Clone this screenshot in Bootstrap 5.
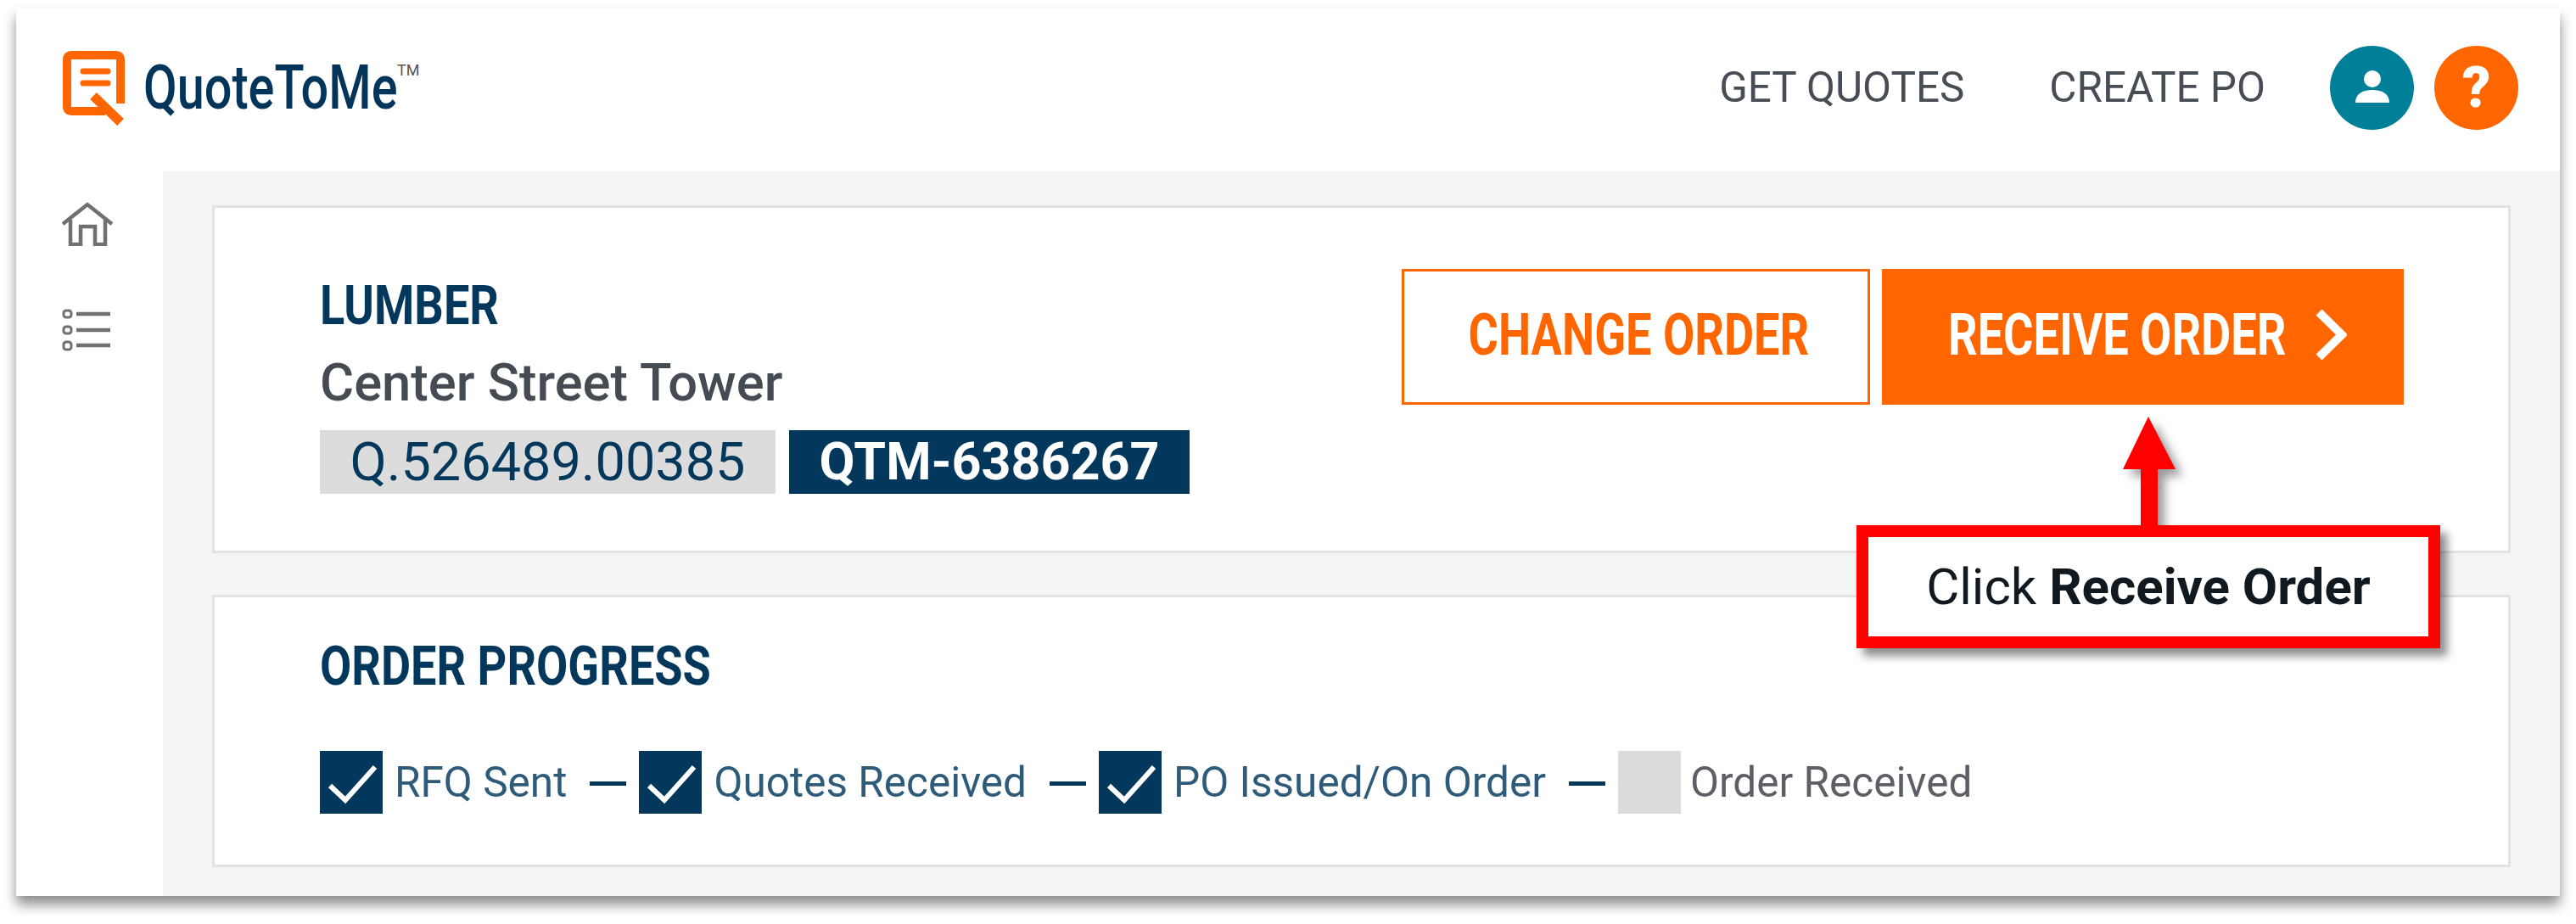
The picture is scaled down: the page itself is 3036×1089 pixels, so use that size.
<!DOCTYPE html>
<html lang="en">
<head>
    <meta charset="UTF-8">
    <title>QuoteToMe - Receive Order</title>
    <link rel="stylesheet" href="https://cdn.jsdelivr.net/npm/bootstrap@5.3.0/dist/css/bootstrap.min.css">
    <style>
        body {
            font-family: Roboto, "Liberation Sans", sans-serif;
            background-color: #fff;
            margin: 0;
            padding: 10px 0 30px 19px;
        }
        .app-window {
            position: relative;
            width: 2998px;
            height: 1046px;
            background-color: #fff;
            box-shadow: 0 10px 14px rgba(0, 0, 0, .45);
        }
        .top-bar {
            height: 192px;
            padding-left: 55px;
            padding-right: 49px;
            padding-bottom: 5px;
        }
        .logo-text {
            font-size: 72px;
            line-height: 1;
            color: #03345a;
            font-weight: 500;
            display: inline-block;
            width: 298px;
            margin-left: 22px;
            white-space: nowrap;
            transform: scaleX(.8);
            transform-origin: left center;
        }
        .logo-tm {
            font-size: 18px;
            line-height: 1;
            color: #555;
            margin-left: 1px;
            align-self: flex-start;
            margin-top: 64px;
        }
        .top-link {
            font-size: 49.400px;
            color: #474d55;
            text-decoration: none;
            white-space: nowrap;
        }
        .top-link + .top-link { margin-left: 100px; }
        .round-btn {
            width: 99px;
            height: 99px;
            border-radius: 50%;
            color: #fff;
            font-size: 66px;
            font-weight: 900;
            line-height: 1;
        }
        .round-first { margin-left: 76px; }
        .round-teal { background-color: #007f99; }
        .round-orange { background-color: #ff6600; }
        .side-rail {
            width: 173px;
            padding-left: 54px;
            padding-top: 36px;
            gap: 74px;
        }
        .work-area {
            background-color: #f4f6f6;
            padding: 40px 58px 33px 58px;
            gap: 49px;
            height: 854px;
        }
        .panel {
            border: 3px solid #e2e4e4;
            background-color: #fff;
        }
        .panel-order {
            height: 410px;
            padding: 72px 123px 0 124px;
        }
        .order-info { padding-top: 12px; }
        .order-actions { gap: 14px; }
        .panel-progress {
            height: 321px;
            padding: 50px 124px 0 124px;
        }
        .panel-title {
            font-size: 64px;
            line-height: 1;
            font-weight: 700;
            color: #03385c;
            margin: 0;
            white-space: nowrap;
            transform: scaleX(.845);
            transform-origin: left center;
        }
        .job-name {
            font-size: 61.500px;
            line-height: 1;
            color: #444b52;
            font-weight: 500;
            margin-top: 28px;
            white-space: nowrap;
        }
        .ref-row { margin-top: 24px; }
        .ref-tag {
            height: 75px;
            font-size: 63px;
            line-height: 75px;
            color: #03385c;
            white-space: nowrap;
            text-align: center;
        }
        .ref-quote { width: 537px; background-color: #dcdcdc; }
        .ref-qtm { width: 472px; background-color: #03385c; color: #fff; font-size: 61px; font-weight: 700; }
        .action-btn {
            height: 160px;
            border-radius: 0;
            font-size: 68px;
            font-weight: 700;
            white-space: nowrap;
            padding: 0 0 5px;
        }
        .action-text {
            display: inline-block;
            transform: scaleX(.796);
        }
        .btn-change {
            width: 552px;
            border: 3px solid #ff6600;
            color: #ff6600;
            background-color: #fff;
            padding-left: 6px;
        }
        .btn-receive {
            width: 615px;
            border: 0;
            background-color: #ff6600;
            color: #fff;
            padding-left: 78px;
        }
        .btn-receive .action-text {
            width: 397px;
            margin-right: 36px;
            transform-origin: left center;
        }
        .step-box {
            width: 74px;
            height: 74px;
            background-color: #03385c;
            flex: none;
        }
        .step-box-empty { background-color: #dcdcdc; }
        .step-row { margin-top: 67px; }
        .step-label {
            font-size: 49.500px;
            color: #2f5b7a;
            white-space: nowrap;
            margin-left: 14px;
        }
        .step-label-off { color: #5c6066; margin-left: 11px; }
        .step-dash {
            width: 43px;
            height: 5px;
            background-color: #03385c;
            margin: 3px 15px 0 27px;
            flex: none;
        }
        .callout {
            position: absolute;
            left: 2169px;
            top: 609px;
            width: 688px;
            height: 145px;
            border: 14px solid #ff0000;
            background-color: #fff;
            box-shadow: 8px 9px 10px rgba(0, 0, 0, .45);
            font-size: 60px;
            color: #101820;
            white-space: nowrap;
        }
        .callout-arrow {
            position: absolute;
            left: 2483px;
            top: 481px;
            filter: drop-shadow(8px 8px 6px rgba(0, 0, 0, .4));
        }
    </style>
</head>
<body>
    <div class="app-window">
        <header class="top-bar d-flex align-items-center">
            <svg width="73" height="88" viewBox="0 0 73 88" fill="none" stroke="#ff6600" class="flex-shrink-0">
                <path d="M68 62V10q0-5-5-5H10q-5 0-5 5v56q0 5 5 5h40" stroke-width="10"/>
                <path d="M24 24h29M24 38h29" stroke-width="7" stroke-linecap="round"/>
                <path d="M36 53l32 31" stroke-width="11"/>
            </svg>
            <span class="logo-text">QuoteToMe</span>
            <span class="logo-tm">TM</span>
            <nav class="d-flex align-items-center ms-auto">
                <a href="#" class="top-link">GET QUOTES</a>
                <a href="#" class="top-link">CREATE PO</a>
                <div class="round-btn round-first round-teal d-flex align-items-center justify-content-center me-4">
                    <svg width="99" height="99" viewBox="0 0 99 99" fill="#fff">
                        <circle cx="50" cy="39" r="10"/>
                        <path d="M30 67c0-10 8-15 20-15s20 5 20 15z"/>
                    </svg>
                </div>
                <div class="round-btn round-orange d-flex align-items-center justify-content-center">?</div>
            </nav>
        </header>
        <div class="d-flex">
            <aside class="side-rail d-flex flex-column">
                <svg width="60" height="52" viewBox="0 0 60 52" fill="none" stroke="#707070" stroke-width="4.500">
                    <path d="M1 26L30 3l29 23"/>
                    <path d="M10 21v29h12V29h17v21h12V21"/>
                </svg>
                <svg width="57" height="50" viewBox="0 0 57 50" fill="none" stroke="#707070">
                    <g stroke-width="3">
                        <rect x="2" y="2" width="9" height="8" rx="3"/>
                        <rect x="2" y="21" width="9" height="8" rx="3"/>
                        <rect x="2" y="39" width="9" height="9" rx="3"/>
                    </g>
                    <path d="M17 6h40M17 25h40M17 43h40" stroke-width="4.500"/>
                </svg>
            </aside>
            <main class="work-area flex-grow-1 d-flex flex-column">
                <section class="panel panel-order d-flex justify-content-between">
                    <div class="order-info">
                        <h5 class="panel-title">LUMBER</h5>
                        <div class="job-name">Center Street Tower</div>
                        <div class="ref-row d-flex gap-3">
                            <div class="ref-tag ref-quote">Q.526489.00385</div>
                            <div class="ref-tag ref-qtm">QTM-6386267</div>
                        </div>
                    </div>
                    <div class="order-actions d-flex align-items-start">
                        <button type="button" class="btn action-btn btn-change"><span class="action-text">CHANGE ORDER</span></button>
                        <button type="button" class="btn action-btn btn-receive d-flex align-items-center">
                            <span class="action-text">RECEIVE ORDER</span>
                            <svg width="37" height="59" viewBox="0 0 37 59" fill="none" stroke="#fff" stroke-width="10">
                                <path d="M4 3l27 26.500L4 56"/>
                            </svg>
                        </button>
                    </div>
                </section>
                <section class="panel panel-progress">
                    <h5 class="panel-title">ORDER PROGRESS</h5>
                    <div class="step-row d-flex align-items-center">
                        <div class="step-box d-flex">
                            <svg width="74" height="74" viewBox="0 0 74 74" fill="none" stroke="#fff" stroke-width="6">
                                <path d="M12 41l18 17 35-39"/>
                            </svg>
                        </div>
                        <span class="step-label">RFQ Sent</span>
                        <span class="step-dash"></span>
                        <div class="step-box d-flex">
                            <svg width="74" height="74" viewBox="0 0 74 74" fill="none" stroke="#fff" stroke-width="6">
                                <path d="M12 41l18 17 35-39"/>
                            </svg>
                        </div>
                        <span class="step-label">Quotes Received</span>
                        <span class="step-dash"></span>
                        <div class="step-box d-flex">
                            <svg width="74" height="74" viewBox="0 0 74 74" fill="none" stroke="#fff" stroke-width="6">
                                <path d="M12 41l18 17 35-39"/>
                            </svg>
                        </div>
                        <span class="step-label">PO Issued/On Order</span>
                        <span class="step-dash"></span>
                        <div class="step-box step-box-empty"></div>
                        <span class="step-label step-label-off">Order Received</span>
                    </div>
                </section>
            </main>
        </div>
        <svg class="callout-arrow" width="62" height="140" viewBox="0 0 62 140" fill="#ff0000">
            <path d="M30 0l32 62H41v78H21V62H0z"/>
        </svg>
        <div class="callout d-flex align-items-center justify-content-center">
            <span>Click&nbsp;<b>Receive Order</b></span>
        </div>
    </div>
    <script src="https://cdn.jsdelivr.net/npm/bootstrap@5.3.0/dist/js/bootstrap.bundle.min.js"></script>
</body>
</html>
